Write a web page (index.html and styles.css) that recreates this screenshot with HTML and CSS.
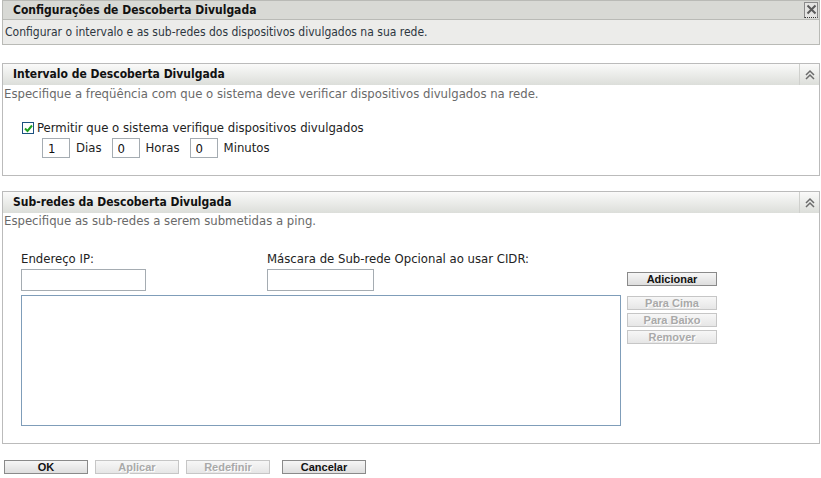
FILE: index.html
```html
<!DOCTYPE html>
<html lang="pt">
<head>
  <meta charset="UTF-8">
  <title>Configurações de Descoberta Divulgada</title>
  <link rel="stylesheet" href="styles.css">
</head>
<body>
  <div class="page-box">
    <div class="page-title">
      <h1>Configurações de Descoberta Divulgada</h1>
      <button class="close-btn" title="Fechar">
        <svg width="11" height="11" viewBox="0 0 11 11"><path d="M1.5 1.5 L9.5 9.5 M9.5 1.5 L1.5 9.5" stroke="#5a5a5a" stroke-width="2" fill="none"/></svg>
      </button>
    </div>
    <div class="page-desc">Configurar o intervalo e as sub-redes dos dispositivos divulgados na sua rede.</div>
  </div>

  <!-- Intervalo -->
  <div class="panel">
    <div class="panel-head">
      <h2>Intervalo de Descoberta Divulgada</h2>
      <span class="collapse">
        <svg width="12" height="12" viewBox="0 0 12 12"><path d="M2 6 L6 2 L10 6 M2 10 L6 6 L10 10" stroke="#6b6b6b" stroke-width="1.5" fill="none"/></svg>
      </span>
    </div>
    <div class="panel-body interval">
      <p class="panel-desc">Especifique a freqüência com que o sistema deve verificar dispositivos divulgados na rede.</p>
      <label class="check-row">
        <span class="checkbox">
          <svg width="9" height="9" viewBox="0 0 9 9"><path d="M1 4.5 L3.5 7 L8 1.5" stroke="#21a121" stroke-width="2" fill="none"/></svg>
        </span>
        Permitir que o sistema verifique dispositivos divulgados
      </label>
      <div class="time-row">
        <input type="text" class="num" value="1"><span>Dias</span>
        <input type="text" class="num" value="0"><span>Horas</span>
        <input type="text" class="num" value="0"><span>Minutos</span>
      </div>
    </div>
  </div>

  <!-- Sub-redes -->
  <div class="panel">
    <div class="panel-head">
      <h2>Sub-redes da Descoberta Divulgada</h2>
      <span class="collapse">
        <svg width="12" height="12" viewBox="0 0 12 12"><path d="M2 6 L6 2 L10 6 M2 10 L6 6 L10 10" stroke="#6b6b6b" stroke-width="1.5" fill="none"/></svg>
      </span>
    </div>
    <div class="panel-body subnets">
      <p class="panel-desc">Especifique as sub-redes a serem submetidas a ping.</p>
      <div class="subnet-grid">
        <div class="fields">
          <div class="field ip">
            <label>Endereço IP:</label>
            <input type="text" class="ip-input">
          </div>
          <div class="field">
            <label>Máscara de Sub-rede Opcional ao usar CIDR:</label>
            <input type="text" class="mask-input">
          </div>
        </div>
        <button class="btn add-btn">Adicionar</button>
        <div class="subnet-list"></div>
        <div class="list-btns">
          <button class="btn" disabled>Para Cima</button>
          <button class="btn" disabled>Para Baixo</button>
          <button class="btn" disabled>Remover</button>
        </div>
      </div>
    </div>
  </div>

  <div class="actions">
    <button class="btn">OK</button>
    <button class="btn" disabled>Aplicar</button>
    <button class="btn" disabled>Redefinir</button>
    <button class="btn cancel">Cancelar</button>
  </div>
</body>
</html>
```

FILE: styles.css
```css
* {
  margin: 0;
  padding: 0;
  box-sizing: border-box;
}

body {
  background-color: #fff;
  color: #222;
  font-family: 'DejaVu Sans Condensed', 'DejaVu Sans', sans-serif;
  font-stretch: condensed;
  font-size: 13px;
  padding: 0 1px 0 2px;
}

/* page title box */
.page-box {
  border: 1px solid #b9bab6;
}

.page-title {
  display: flex;
  justify-content: space-between;
  align-items: flex-start;
  background-color: #d8d9d5;
  height: 19px;
  border-bottom: 1px solid #b9bab6;
  padding-left: 10px;
}

.page-title h1 {
  font-size: 12px;
  font-weight: bold;
  line-height: 18px;
  color: #111;
}

.close-btn {
  width: 14px;
  height: 16px;
  margin: 1px 1px 0 0;
  background-color: #e4e4e2;
  border: 1px solid #8a8a8a;
  border-bottom: 1px dotted #333;
  display: flex;
  align-items: center;
  justify-content: center;
  padding-bottom: 2px;
}

.page-desc {
  background-color: #ececea;
  line-height: 24px;
  padding-left: 2px;
  font-size: 12px;
  color: #2d3640;
}

/* panels */
.panel {
  border: 1px solid #bbbbbb;
  margin-top: 18px;
}

.panel + .panel {
  margin-top: 15px;
}

.panel-head {
  display: flex;
  justify-content: space-between;
  height: 21px;
  background: linear-gradient(#fafaf9, #dcdeda);
}

.panel-head h2 {
  font-size: 12px;
  font-weight: bold;
  line-height: 21px;
  padding-left: 10px;
  color: #111;
}

.collapse {
  width: 20px;
  border-left: 1px solid #cfd0cd;
  display: flex;
  align-items: center;
  justify-content: center;
}

.panel-desc {
  color: #6a6a6a;
  line-height: 16px;
  padding-left: 1px;
}

.interval {
  padding: 1px 0 17px;
}

.check-row {
  display: flex;
  align-items: center;
  gap: 3px;
  margin: 18px 0 0 19px;
  line-height: 16px;
  color: #222;
}

.checkbox {
  width: 12px;
  height: 12px;
  border: 1px solid #1c5180;
  background-color: #fff;
  display: flex;
  align-items: center;
  justify-content: center;
}

.time-row {
  display: flex;
  align-items: center;
  margin: 2px 0 0 39px;
}

.time-row span {
  margin: 0 10px 0 6px;
  line-height: 16px;
  color: #222;
}

input[type="text"] {
  font-family: inherit;
  font-size: 13px;
  border: 1px solid #a5acb2;
  background-color: #fff;
  color: #111;
  outline: none;
}

.num {
  width: 28px;
  height: 20px;
  padding-left: 5px;
}

.subnets {
  padding: 0 0 17px 18px;
}

.subnets .panel-desc {
  margin-left: -18px;
}

.subnet-grid {
  display: grid;
  grid-template-columns: 600px 90px;
  column-gap: 6px;
  row-gap: 4px;
  margin-top: 22px;
}

.fields {
  display: flex;
}

.field {
  display: flex;
  flex-direction: column;
  gap: 2px;
}

.field.ip {
  width: 246px;
}

.field label {
  line-height: 16px;
  color: #222;
}

.ip-input {
  width: 125px;
  height: 22px;
}

.mask-input {
  width: 107px;
  height: 22px;
}

.add-btn {
  align-self: end;
  margin-bottom: 5px;
}

.subnet-list {
  height: 131px;
  border: 1px solid #7f9db9;
}

.list-btns {
  display: flex;
  flex-direction: column;
  gap: 3px;
  padding-top: 1px;
}

/* buttons */
.btn {
  width: 90px;
  height: 14px;
  font-family: 'Liberation Sans', Arial, sans-serif;
  font-size: 11px;
  font-weight: bold;
  line-height: 12px;
  color: #111;
  background: linear-gradient(#f6f6f6, #dedede);
  border: 1px solid #8a8a8a;
}

.btn:disabled {
  color: #a9a9a9;
  border-color: #c6c6c6;
  text-shadow: 1px 1px 0 #fff;
  background: linear-gradient(#f7f7f7, #e6e6e6);
}

.actions {
  display: flex;
  gap: 7px;
  margin: 16px 0 0 2px;
}

.actions .btn {
  width: 84px;
}

.actions .cancel {
  margin-left: 5px;
}
```
